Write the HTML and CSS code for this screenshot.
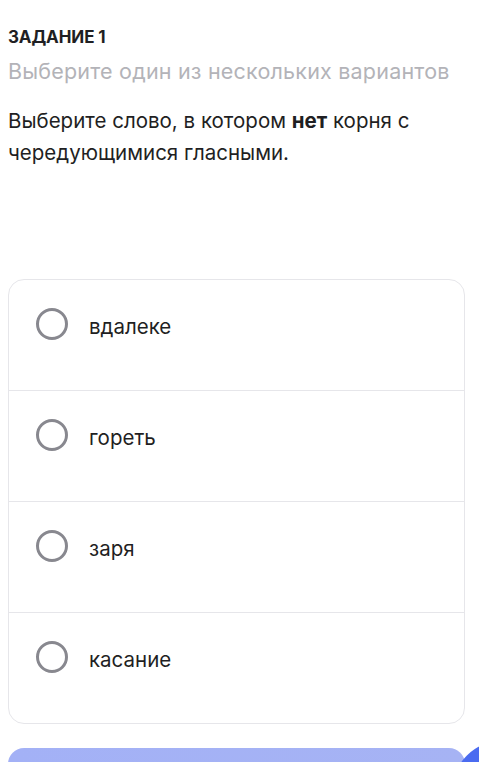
FILE: index.html
```html
<!DOCTYPE html>
<html lang="ru">
<head>
    <meta charset="UTF-8">
    <meta name="viewport" content="width=device-width, initial-scale=1.0">
    <title>Задание 1</title>
    <link rel="stylesheet" href="styles.css">
</head>
<body>
    <div class="task">
        <div class="task-title">ЗАДАНИЕ 1</div>
        <div class="task-hint">Выберите один из нескольких вариантов</div>
        <p class="task-question">Выберите слово, в котором <b>нет</b> корня с чередующимися гласными.</p>

        <!-- Answer options -->
        <div class="options">
            <label class="option"><span class="radio"></span><span class="option-text">вдалеке</span></label>
            <label class="option"><span class="radio"></span><span class="option-text">гореть</span></label>
            <label class="option"><span class="radio"></span><span class="option-text">заря</span></label>
            <label class="option"><span class="radio"></span><span class="option-text">касание</span></label>
        </div>

        <button class="submit" disabled></button>
    </div>
    <div class="fab"></div>
</body>
</html>
```

FILE: styles.css
```css
html {
    overflow: hidden;
}
body {
    font-family: Inter, "Noto Sans", sans-serif;
    margin: 0;
    padding: 0 14px 0 8px;
    background: #fff;
    color: #1f1f23;
    overflow: hidden;
}
.task {
    padding-top: 27px;
}
.task-title {
    font-size: 17px;
    font-weight: 700;
    line-height: 20px;
    letter-spacing: -0.1px;
}
.task-hint {
    margin-top: 11px;
    font-size: 21.5px;
    line-height: 27px;
    letter-spacing: 0.2px;
    color: #b3b3b8;
    white-space: nowrap;
}
.task-question {
    margin: 20px 0 0;
    font-size: 20.5px;
    line-height: 32px;
    color: #1f1f23;
}
.task-question b {
    font-weight: 700;
}
.options {
    margin-top: 110px;
    border: 1px solid #e6e6ea;
    border-radius: 16px;
    overflow: hidden;
}
.option {
    display: flex;
    align-items: center;
    padding: 28px 0 50px 27px;
    border-top: 1px solid #e6e6ea;
    height: 32px;
}
.option:first-child {
    border-top: none;
}
.radio {
    width: 26px;
    height: 26px;
    border: 3px solid #88888f;
    border-radius: 50%;
    flex-shrink: 0;
}
.option-text {
    margin-left: 21px;
    margin-top: 4px;
    font-size: 20.5px;
    color: #1f1f23;
}
.submit {
    display: block;
    width: 100%;
    height: 52px;
    margin-top: 24px;
    border: none;
    border-radius: 16px;
    background: linear-gradient(90deg, #a3b1f6, #a6b3f4);
}
.fab {
    position: absolute;
    left: 452px;
    top: 741px;
    width: 100px;
    height: 100px;
    border-radius: 50%;
    background: #4a6bf0;
}
```
